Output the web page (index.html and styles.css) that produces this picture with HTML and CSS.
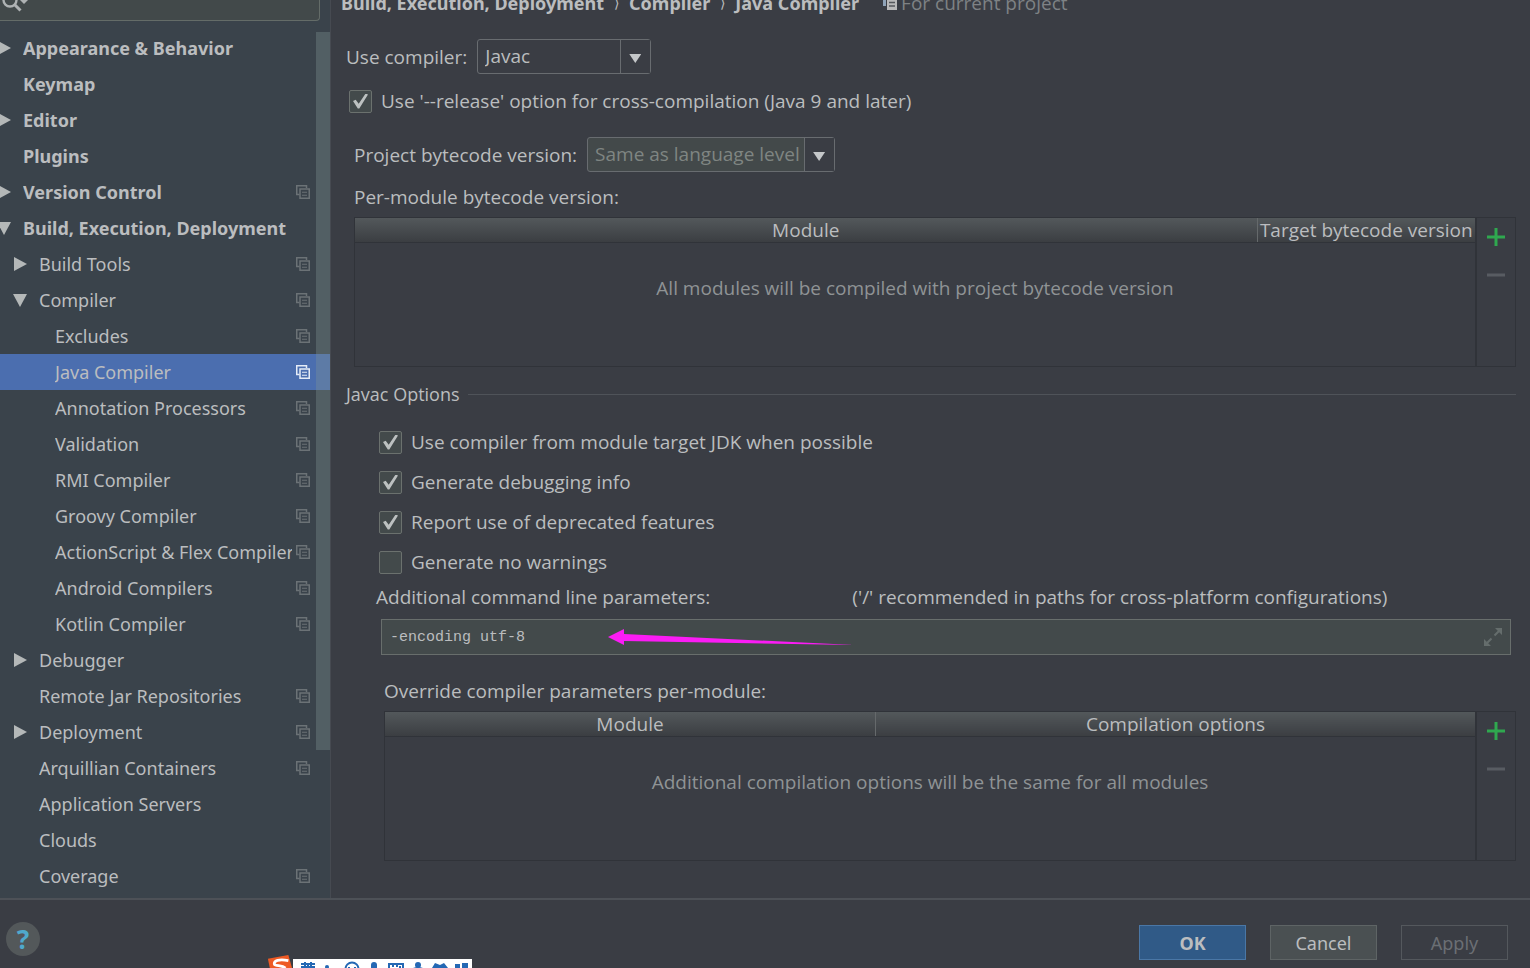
FILE: index.html
```
<!DOCTYPE html>
<html lang="en">
<head>
<meta charset="utf-8">
<title>Settings</title>
<link rel="stylesheet" href="styles.css">
</head>
<body>
<svg class="defs" aria-hidden="true">
  <symbol id="copy" viewBox="0 0 14 14"><path d="M3.5 9.500H.75V.75H10.500V3" fill="none" stroke="currentColor" stroke-width="1.500"/><path d="M4 4H13.250V13.250H4Z" fill="none" stroke="currentColor" stroke-width="1.500"/><path d="M6 7.250H11M6 10.250H11" stroke="currentColor" stroke-width="1.200"/></symbol>
  <symbol id="scope" viewBox="0 0 14 14"><path d="M0 0H3V10H0Z" fill="#8fa3b8"/><path d="M4 3H14V14H4Z" fill="#b9b9b9"/><path d="M6 6.500H12M6 10H12" stroke="#55585c" stroke-width="1.500"/></symbol>
  <symbol id="right" viewBox="0 0 14 14"><path d="M1 0L14 7L1 14Z" fill="currentColor"/></symbol>
  <symbol id="down" viewBox="0 0 14 14"><path d="M0 1H14L7 14Z" fill="currentColor"/></symbol>
  <symbol id="plus" viewBox="0 0 18 18"><path d="M9 0V18M0 9H18" stroke="currentColor" stroke-width="3"/></symbol>
  <symbol id="minus" viewBox="0 0 18 18"><path d="M0 9H18" stroke="currentColor" stroke-width="3"/></symbol>
</svg>
<div class="dialog">
  <aside class="sidebar">
    <div class="search">
      <svg class="search-icon" viewBox="0 0 28 20" aria-hidden="true"><circle cx="10" cy="8" r="6.500" fill="none" stroke="currentColor" stroke-width="2.400"/><path d="M14.500 12.500L20.500 18.500" stroke="currentColor" stroke-width="3"/><path d="M20 8H28L24 12Z" fill="currentColor"/></svg>
      <input type="text" aria-label="Search settings">
    </div>
    <nav class="tree">
      <a href="#" class="row top"><svg class="arrow"><use href="#right"/></svg><span>Appearance &amp; Behavior</span></a>
      <a href="#" class="row top"><i class="arrow"></i><span>Keymap</span></a>
      <a href="#" class="row top"><svg class="arrow"><use href="#right"/></svg><span>Editor</span></a>
      <a href="#" class="row top"><i class="arrow"></i><span>Plugins</span></a>
      <a href="#" class="row top"><svg class="arrow"><use href="#right"/></svg><span>Version Control</span><svg class="copy"><use href="#copy"/></svg></a>
      <a href="#" class="row top"><svg class="arrow"><use href="#down"/></svg><span>Build, Execution, Deployment</span></a>
      <a href="#" class="row mid"><svg class="arrow"><use href="#right"/></svg><span>Build Tools</span><svg class="copy"><use href="#copy"/></svg></a>
      <a href="#" class="row mid"><svg class="arrow"><use href="#down"/></svg><span>Compiler</span><svg class="copy"><use href="#copy"/></svg></a>
      <a href="#" class="row leaf"><span>Excludes</span><svg class="copy"><use href="#copy"/></svg></a>
      <a href="#" class="row leaf selected" aria-current="page"><span>Java Compiler</span><svg class="copy"><use href="#copy"/></svg></a>
      <a href="#" class="row leaf"><span>Annotation Processors</span><svg class="copy"><use href="#copy"/></svg></a>
      <a href="#" class="row leaf"><span>Validation</span><svg class="copy"><use href="#copy"/></svg></a>
      <a href="#" class="row leaf"><span>RMI Compiler</span><svg class="copy"><use href="#copy"/></svg></a>
      <a href="#" class="row leaf"><span>Groovy Compiler</span><svg class="copy"><use href="#copy"/></svg></a>
      <a href="#" class="row leaf"><span>ActionScript &amp; Flex Compiler</span><svg class="copy"><use href="#copy"/></svg></a>
      <a href="#" class="row leaf"><span>Android Compilers</span><svg class="copy"><use href="#copy"/></svg></a>
      <a href="#" class="row leaf"><span>Kotlin Compiler</span><svg class="copy"><use href="#copy"/></svg></a>
      <a href="#" class="row mid"><svg class="arrow"><use href="#right"/></svg><span>Debugger</span></a>
      <a href="#" class="row mid"><i class="arrow"></i><span>Remote Jar Repositories</span><svg class="copy"><use href="#copy"/></svg></a>
      <a href="#" class="row mid"><svg class="arrow"><use href="#right"/></svg><span>Deployment</span><svg class="copy"><use href="#copy"/></svg></a>
      <a href="#" class="row mid"><i class="arrow"></i><span>Arquillian Containers</span><svg class="copy"><use href="#copy"/></svg></a>
      <a href="#" class="row mid"><i class="arrow"></i><span>Application Servers</span></a>
      <a href="#" class="row mid"><i class="arrow"></i><span>Clouds</span></a>
      <a href="#" class="row mid"><i class="arrow"></i><span>Coverage</span><svg class="copy"><use href="#copy"/></svg></a>
    </nav>
    <div class="scroll-thumb"></div>
  </aside>
  <main class="content">
    <header class="crumbs">
      <b>Build, Execution, Deployment</b><span class="sep">⟩</span><b>Compiler</b><span class="sep">⟩</span><b>Java Compiler</b>
      <span class="scope"><svg class="copy"><use href="#scope"/></svg>For current project</span>
    </header>
    <div class="field">
      <label for="compiler">Use compiler:</label>
      <div class="combo"><select id="compiler"><option>Javac</option></select><span class="combo-arrow"></span></div>
    </div>
    <label class="check release"><input type="checkbox" checked>Use '--release' option for cross-compilation (Java 9 and later)</label>
    <section class="bytecode">
      <div class="field">
        <label for="level">Project bytecode version:</label>
        <div class="combo dim"><select id="level"><option>Same as language level</option></select><span class="combo-arrow"></span></div>
      </div>
      <h2 class="caption">Per-module bytecode version:</h2>
      <div class="grid-panel">
        <table class="modules">
          <thead><tr><th>Module</th><th class="target">Target bytecode version</th></tr></thead>
          <tbody><tr><td colspan="2">All modules will be compiled with project bytecode version</td></tr></tbody>
        </table>
        <div class="tools">
          <button class="add" aria-label="Add"><svg><use href="#plus"/></svg></button>
          <button class="remove" aria-label="Remove" disabled><svg><use href="#minus"/></svg></button>
        </div>
      </div>
    </section>
    <h2 class="group">Javac Options</h2>
    <section class="options">
      <label class="check"><input type="checkbox" checked>Use compiler from module target JDK when possible</label>
      <label class="check"><input type="checkbox" checked>Generate debugging info</label>
      <label class="check"><input type="checkbox" checked>Report use of deprecated features</label>
      <label class="check"><input type="checkbox">Generate no warnings</label>
    </section>
    <div class="params-head"><label for="params">Additional command line parameters:</label><span>('/' recommended in paths for cross-platform configurations)</span></div>
    <div class="params">
      <input id="params" type="text" value="-encoding utf-8">
      <svg class="pointer" viewBox="0 0 246 18" aria-hidden="true"><path d="M0 8L16 0V5L246 16L16 12V16Z" fill="#fb1cf5"/></svg>
      <svg class="expand" viewBox="0 0 20 20" aria-hidden="true"><path d="M12 1H19V8ZM1 12V19H8Z" fill="currentColor"/><path d="M17 3L11.500 8.500M3 17L8.500 11.500" stroke="currentColor" stroke-width="2"/></svg>
    </div>
    <section class="override">
      <h2 class="caption">Override compiler parameters per-module:</h2>
      <div class="grid-panel">
        <table class="modules">
          <thead><tr><th class="name">Module</th><th>Compilation options</th></tr></thead>
          <tbody><tr><td colspan="2">Additional compilation options will be the same for all modules</td></tr></tbody>
        </table>
        <div class="tools">
          <button class="add" aria-label="Add"><svg><use href="#plus"/></svg></button>
          <button class="remove" aria-label="Remove" disabled><svg><use href="#minus"/></svg></button>
        </div>
      </div>
    </section>
  </main>
</div>
<footer class="footer">
  <button class="help" aria-label="Help">?</button>
  <div class="actions">
    <button class="btn ok">OK</button>
    <button class="btn cancel">Cancel</button>
    <button class="btn apply" disabled>Apply</button>
  </div>
</footer>
<div class="ime">
  <svg class="ime-logo" viewBox="0 0 26 14" aria-hidden="true"><path d="M0 4L22 0L26 14H2Z" fill="#ee5a24"/><path d="M22 6C12 4 6 6 7 10C8 12 15 11 19 14" fill="none" stroke="#fff" stroke-width="3"/></svg>
  <div class="ime-bar">
    <svg viewBox="0 0 180 9" aria-hidden="true"><g fill="none" stroke="#2468b4" stroke-width="2"><path d="M8 5H22M12 3V7M18 3V7M9 9V8H21V9M15 6V9"/><circle cx="59" cy="10" r="6.500"/><path d="M56 8V10M62 8V10M96 9V5H110V9M99 7H101M103 7H105M107 7V9"/></g><g fill="#2468b4"><circle cx="34" cy="8" r="2"/><rect x="78" y="3" width="6" height="8" rx="3"/><circle cx="125" cy="6" r="3"/><path d="M120 9Q125 7 130 9ZM139 9L142 4L147 6L151 4L155 9ZM162 5H167V9H162ZM169 4H175V9H169Z"/></g></svg>
  </div>
</div>
</body>
</html>
```
FILE: styles.css
```
* { box-sizing: border-box; }
body {
  margin: 0;
  height: 100vh;
  display: flex;
  flex-direction: column;
  overflow: hidden;
  background: #3a3d44;
  color: #bbbdbf;
  font: 19px/24px "Open Sans", "Noto Sans", sans-serif;
}
.defs { display: none; }
button, input, select { font: inherit; color: inherit; }
h2 { margin: 0; font: inherit; }

.dialog { flex: 1; min-height: 0; display: flex; }

.sidebar {
  position: relative;
  flex: none;
  width: 331px;
  overflow: hidden;
  background: #3a434b;
  border-right: 1px solid #464a51;
  font: 18px/24px "Noto Sans", sans-serif;
}
.search {
  display: flex;
  height: 21px;
  margin: 0 10px 9px 0;
  background: #42494a;
  border: solid #646c68;
  border-width: 0 1px 1px 0;
  border-radius: 0 0 4px 0;
}
.search-icon { width: 28px; height: 20px; margin-top: -8px; flex: none; color: #aeb2b3; }
.search input { flex: 1; min-width: 0; border: 0; background: none; outline: 0; }
.row {
  display: flex;
  align-items: center;
  gap: 12px;
  height: 36px;
  padding-right: 20px;
  color: inherit;
  text-decoration: none;
  white-space: nowrap;
}
.row span { flex: 1; min-width: 0; overflow: hidden; }
.top { font-weight: bold; margin-left: -3px; }
.mid { padding-left: 13px; }
.leaf { padding-left: 55px; }
.row .copy { margin-left: -8px; }
.arrow { width: 14px; height: 14px; flex: none; color: #b4b8b8; }
.copy { width: 14px; height: 14px; flex: none; color: #6b7276; }
.selected { background: #4b6eaf; }
.selected .copy { color: #e4ebf7; }
.scroll-thumb {
  position: absolute;
  top: 32px;
  right: 0;
  width: 14px;
  height: 718px;
  background: rgba(128, 148, 148, .35);
}

.content { flex: 1; min-width: 0; padding: 0 14px 0 15px; }
.crumbs { display: flex; gap: 10px; height: 24px; margin: -9px 0 24px -5px; white-space: nowrap; }
.crumbs b { font: bold 18px/24px "Noto Sans", sans-serif; }
.sep { font-size: 14px; }
.scope { display: flex; align-items: center; gap: 4px; margin-left: 14px; color: #7e8285; }

.field { display: flex; align-items: center; gap: 10px; }
.combo { position: relative; height: 35px; }
.combo select {
  appearance: none;
  display: block;
  height: 100%;
  width: 174px;
  padding: 0 31px 2px 7px;
  background: #3a3d44;
  border: 1px solid #686c70;
  border-radius: 3px;
}
.combo-arrow {
  position: absolute;
  top: 1px;
  right: 1px;
  bottom: 1px;
  width: 30px;
  border-left: 1px solid #686c70;
  background: #3a3d44;
  pointer-events: none;
}
.combo-arrow::before {
  content: "";
  position: absolute;
  top: 14px;
  left: 8px;
  width: 12px;
  height: 9px;
  background: #c4c7c9;
  clip-path: polygon(0 0, 100% 0, 50% 100%);
}
.dim { color: #7f8582; }
.dim select { width: 248px; background: #43494a; }

.check { display: flex; align-items: center; gap: 9px; height: 24px; }
.check input {
  appearance: none;
  width: 23px;
  height: 23px;
  margin: 0;
  background: #434a4b;
  border: 1px solid #6b716e;
  border-radius: 2px;
}
.check input:checked::before {
  content: "";
  display: block;
  width: 15px;
  height: 15px;
  margin: 3px;
  background: #bcc0c0;
  clip-path: polygon(0 50%, 18% 42%, 38% 68%, 84% 0, 100% 6%, 42% 100%, 32% 100%);
}
.release { margin: 15px 0 24px 3px; }

.bytecode { margin-left: 8px; }
.caption { height: 24px; margin: 13px 0 8px; }
.grid-panel { display: flex; height: 150px; border: 1px solid #303339; }
.modules { flex: 1; border-collapse: collapse; table-layout: fixed; height: 100%; }
.modules th {
  height: 24px;
  padding: 0;
  font-weight: normal;
  white-space: nowrap;
  background: linear-gradient(#53585b, #3b3e42);
  border-bottom: 1px solid #303339;
}
.modules th + th { border-left: 1px solid #65696b; }
.modules .target { width: 218px; }
.modules .name { width: 45%; }
.modules td { padding: 0 0 34px; text-align: center; color: #8f9395; }
.tools {
  display: flex;
  flex-direction: column;
  align-items: center;
  gap: 20px;
  width: 40px;
  padding-top: 10px;
  border-left: 2px solid #303339;
}
.tools button { padding: 0; border: 0; background: none; width: 18px; height: 18px; }
.tools svg { display: block; width: 18px; height: 18px; }
.add { color: #2fa84f; }
.remove { color: #585c62; }

.group { display: flex; align-items: center; gap: 8px; height: 24px; margin: 15px 0; font-size: 18px; }
.group::after { content: ""; flex: 1; border-top: 1px solid #4f5359; }
.options { display: flex; flex-direction: column; gap: 16px; margin: 24px 0 11px 33px; }
.params-head { display: flex; gap: 142px; margin-left: 30px; white-space: nowrap; }
.params { position: relative; margin: 10px 5px 0 35px; }
.params input {
  display: block;
  width: 100%;
  height: 36px;
  padding: 0 40px 0 8px;
  background: #434a4b;
  border: 1px solid #686e6c;
  font: 15px/20px "Liberation Mono", monospace;
}
.pointer { position: absolute; left: 227px; top: 10px; width: 246px; height: 18px; }
.expand { position: absolute; right: 8px; top: 8px; width: 20px; height: 20px; color: #656d6c; }
.override { margin: 24px 0 0 38px; }

.footer {
  flex: none;
  display: flex;
  justify-content: space-between;
  align-items: flex-start;
  height: 70px;
  padding: 25px 22px 0 6px;
  border-top: 2px solid #4d5157;
}
.help {
  width: 34px;
  height: 34px;
  margin-top: -3px;
  padding: 0;
  border: 0;
  border-radius: 50%;
  background: #53585a;
  color: #4fa9cc;
  font: bold 26px/34px "Noto Sans", sans-serif;
}
.actions { display: flex; gap: 24px; }
.btn {
  width: 107px;
  height: 35px;
  padding: 0;
  border: 1px solid #5e6465;
  background: #4a5052;
  font: 18px/24px "Noto Sans", sans-serif;
}
.ok { background: #305a87; border-color: #4a77a6; font-weight: bold; }
.apply { background: none; border-color: #54585d; color: #6b6f74; }

.ime { position: fixed; left: 267px; bottom: 0; display: flex; align-items: flex-end; }
.ime-logo { width: 26px; height: 13px; }
.ime-bar { width: 179px; height: 9px; background: #fff; }
.ime-bar svg { display: block; width: 180px; height: 9px; }
```
